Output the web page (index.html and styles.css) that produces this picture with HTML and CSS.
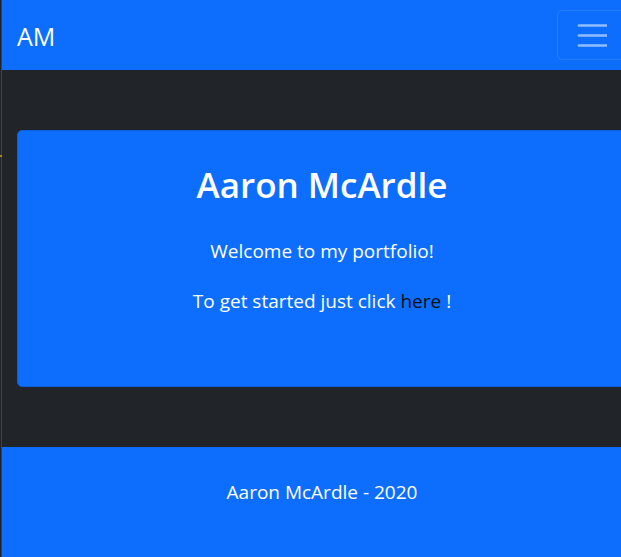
FILE: index.html
```html
<!DOCTYPE html>
<html lang="en">
<head>
  <meta charset="utf-8">
  <meta name="viewport" content="width=device-width, initial-scale=1">
  <title>Aaron McArdle</title>
  <link rel="stylesheet" href="styles.css">
</head>
<body>
  <div class="page">
    <nav class="navbar">
      <a class="brand" href="#">AM</a>
      <button class="toggler" type="button" aria-label="Toggle navigation">
        <svg class="toggler-icon" viewBox="0 0 30 30" aria-hidden="true">
          <path d="M1.8 5.5h28M1.8 15.5h28M1.8 25.5h28" fill="none" stroke="currentColor" stroke-width="2.5" stroke-linecap="round"/>
        </svg>
      </button>
    </nav>
    <main class="content">
      <section class="card">
        <h1 class="title">Aaron McArdle</h1>
        <p class="text">Welcome to my portfolio!</p>
        <p class="text">To get started just click <a class="link" href="#">here</a> !</p>
      </section>
    </main>
    <footer class="footer">
      <p class="text">Aaron McArdle - 2020</p>
    </footer>
  </div>
  <span class="edge-mark"></span>
</body>
</html>
```
FILE: styles.css
```css
* {
  box-sizing: border-box;
}

html {
  height: 100%;
}

body {
  position: relative;
  min-height: 100%;
  margin: 0;
  overflow: hidden;
  display: flex;
  background: #212529;
  color: #fff;
  font-family: "Segoe UI", "Open Sans", "Noto Sans", sans-serif;
  font-size: 19px;
  line-height: 30px;
}

.page {
  flex: 1;
  display: flex;
  flex-direction: column;
  margin-left: 1px;
  margin-right: -21px;
  border-left: 1px solid #3c3d50;
}

.navbar {
  display: flex;
  align-items: center;
  justify-content: space-between;
  padding: 10px 15px;
  background: #0d6efd;
}

.brand {
  color: #fff;
  font-size: 25px;
  line-height: 40px;
  text-decoration: none;
  padding-top: 2px;
}

.toggler {
  display: flex;
  padding: 5px 19px;
  border: 1px solid rgba(255, 255, 255, 0.1);
  border-radius: 5px;
  background: transparent;
  color: rgba(255, 255, 255, 0.55);
}

.toggler-icon {
  width: 30px;
  height: 38px;
}

.content {
  padding: 60px 15px;
}

.card {
  padding: 31px 20px 70px;
  border: 1px solid #0b5fda;
  border-radius: 5px;
  background: #0d6efd;
  text-align: center;
}

.title {
  margin: 0 0 28px;
  font-size: 35px;
  font-weight: 600;
  line-height: 46px;
}

.text {
  margin: 0 0 20px;
}

.card .text:last-child {
  margin-bottom: 0;
}

.link {
  color: #0b0f14;
  text-decoration: none;
}

.footer {
  flex: 1;
  padding: 30px 15px;
  background: #0d6efd;
  text-align: center;
}

.edge-mark {
  position: absolute;
  left: 0;
  top: 155px;
  width: 2px;
  height: 2px;
  background: #a88a1c;
}
```
